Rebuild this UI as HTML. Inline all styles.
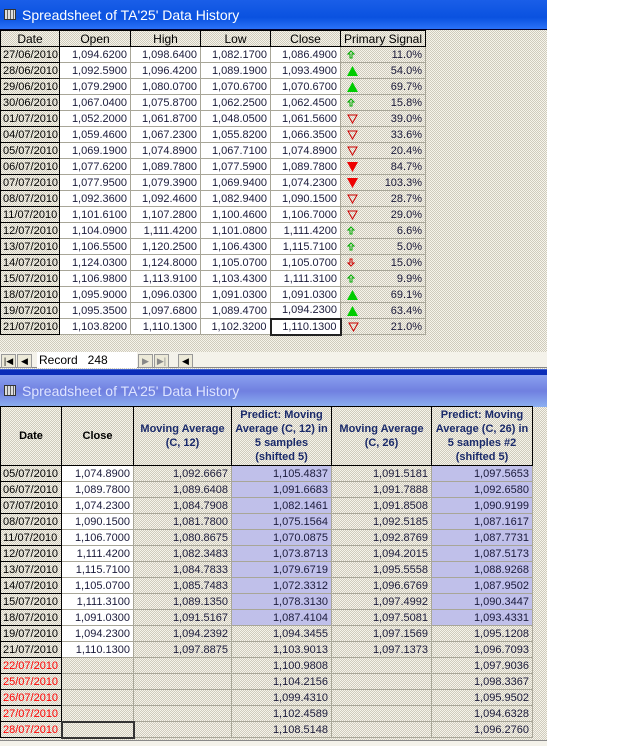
<!DOCTYPE html>
<html><head><meta charset="utf-8"><style>
*{margin:0;padding:0;box-sizing:border-box}
body{width:628px;height:746px;background:#fff;position:relative;overflow:hidden;font-family:"Liberation Sans",Arial,sans-serif;font-size:11px;color:#1a1a3a}
.dith{background:repeating-conic-gradient(#f6f4ea 0 25%,#cfcbbd 0 50%) 0 0/2px 2px}
.abs{position:absolute}
table{border-collapse:collapse;table-layout:fixed;position:absolute}
td,th{height:16px;padding:0 3px;white-space:nowrap;overflow:hidden;border:1px solid #a8a698;text-align:right;font-weight:normal;line-height:14px}
th{text-align:center;border:1px solid #000;color:#000;font-size:12px}
td.d{border:1px solid #000;text-align:left;padding:0 2px;color:#000}
.w{background:#fff}
.lv{background:repeating-conic-gradient(#d8d8f4 0 25%,#a8a8e0 0 50%) 0 0/2px 2px}
.r{color:#f00!important}
.sig{text-align:right;position:relative}
.sig svg{position:absolute;left:6px;top:3px}
.title{color:#fff;font-size:14px;line-height:30px;padding-left:22px}
.grid{position:absolute;left:4px;top:9px;width:12px;height:11px;border:1px solid #333;background:repeating-linear-gradient(90deg,#ddd 0 2px,#666 2px 3px),#ddd}
.btn{position:absolute;top:2px;width:15px;height:14px;background:#ece9d8;border:1px solid #999;font-size:9px;line-height:12px;text-align:center;color:#000}
</style></head><body>
<div class="abs dith" style="left:0;top:0;width:547px;height:369px"></div>
<div class="abs" style="left:0;top:0;width:547px;height:30px;background:linear-gradient(#1a5ee8,#0a52e0 60%,#2a72f8);border-bottom:1px solid #003"><div class="grid"></div><div class="title">Spreadsheet of TA'25' Data History</div></div>
<table style="left:0;top:30px;width:425px">
<colgroup><col style="width:59px"><col style="width:71px"><col style="width:70px"><col style="width:70px"><col style="width:70px"><col style="width:85px"></colgroup>
<tr><th>Date</th><th>Open</th><th>High</th><th>Low</th><th>Close</th><th>Primary Signal</th></tr>
<tr><td class="d">27/06/2010</td><td class="w">1,094.6200</td><td class="w">1,098.6400</td><td class="w">1,082.1700</td><td class="w">1,086.4900</td><td class="sig"><svg width="8" height="9"><path d="M4 1L1 4H3V8H5V4H7Z" fill="none" stroke="#0a0" stroke-width="1"/></svg>11.0%</td></tr>
<tr><td class="d">28/06/2010</td><td class="w">1,092.5900</td><td class="w">1,096.4200</td><td class="w">1,089.1900</td><td class="w">1,093.4900</td><td class="sig"><svg width="11" height="10"><path d="M5.5 0L11 10H0Z" fill="#0c0"/></svg>54.0%</td></tr>
<tr><td class="d">29/06/2010</td><td class="w">1,079.2900</td><td class="w">1,080.0700</td><td class="w">1,070.6700</td><td class="w">1,070.6700</td><td class="sig"><svg width="11" height="10"><path d="M5.5 0L11 10H0Z" fill="#0c0"/></svg>69.7%</td></tr>
<tr><td class="d">30/06/2010</td><td class="w">1,067.0400</td><td class="w">1,075.8700</td><td class="w">1,062.2500</td><td class="w">1,062.4500</td><td class="sig"><svg width="8" height="9"><path d="M4 1L1 4H3V8H5V4H7Z" fill="none" stroke="#0a0"/></svg>15.8%</td></tr>
<tr><td class="d">01/07/2010</td><td class="w">1,052.2000</td><td class="w">1,061.8700</td><td class="w">1,048.0500</td><td class="w">1,061.5600</td><td class="sig"><svg width="11" height="10"><path d="M1 1H10L5.5 9Z" fill="none" stroke="#c00"/></svg>39.0%</td></tr>
<tr><td class="d">04/07/2010</td><td class="w">1,059.4600</td><td class="w">1,067.2300</td><td class="w">1,055.8200</td><td class="w">1,066.3500</td><td class="sig"><svg width="11" height="10"><path d="M1 1H10L5.5 9Z" fill="none" stroke="#c00"/></svg>33.6%</td></tr>
<tr><td class="d">05/07/2010</td><td class="w">1,069.1900</td><td class="w">1,074.8900</td><td class="w">1,067.7100</td><td class="w">1,074.8900</td><td class="sig"><svg width="11" height="10"><path d="M1 1H10L5.5 9Z" fill="none" stroke="#c00"/></svg>20.4%</td></tr>
<tr><td class="d">06/07/2010</td><td class="w">1,077.6200</td><td class="w">1,089.7800</td><td class="w">1,077.5900</td><td class="w">1,089.7800</td><td class="sig"><svg width="11" height="10"><path d="M0 0H11L5.5 10Z" fill="#e00"/></svg>84.7%</td></tr>
<tr><td class="d">07/07/2010</td><td class="w">1,077.9500</td><td class="w">1,079.3900</td><td class="w">1,069.9400</td><td class="w">1,074.2300</td><td class="sig"><svg width="11" height="10"><path d="M0 0H11L5.5 10Z" fill="#e00"/></svg>103.3%</td></tr>
<tr><td class="d">08/07/2010</td><td class="w">1,092.3600</td><td class="w">1,092.4600</td><td class="w">1,082.9400</td><td class="w">1,090.1500</td><td class="sig"><svg width="11" height="10"><path d="M1 1H10L5.5 9Z" fill="none" stroke="#c00"/></svg>28.7%</td></tr>
<tr><td class="d">11/07/2010</td><td class="w">1,101.6100</td><td class="w">1,107.2800</td><td class="w">1,100.4600</td><td class="w">1,106.7000</td><td class="sig"><svg width="11" height="10"><path d="M1 1H10L5.5 9Z" fill="none" stroke="#c00"/></svg>29.0%</td></tr>
<tr><td class="d">12/07/2010</td><td class="w">1,104.0900</td><td class="w">1,111.4200</td><td class="w">1,101.0800</td><td class="w">1,111.4200</td><td class="sig"><svg width="8" height="9"><path d="M4 1L1 4H3V8H5V4H7Z" fill="none" stroke="#0a0"/></svg>6.6%</td></tr>
<tr><td class="d">13/07/2010</td><td class="w">1,106.5500</td><td class="w">1,120.2500</td><td class="w">1,106.4300</td><td class="w">1,115.7100</td><td class="sig"><svg width="8" height="9"><path d="M4 1L1 4H3V8H5V4H7Z" fill="none" stroke="#0a0"/></svg>5.0%</td></tr>
<tr><td class="d">14/07/2010</td><td class="w">1,124.0300</td><td class="w">1,124.8000</td><td class="w">1,105.0700</td><td class="w">1,105.0700</td><td class="sig"><svg width="8" height="9"><path d="M4 8L1 5H3V1H5V5H7Z" fill="none" stroke="#c00"/></svg>15.0%</td></tr>
<tr><td class="d">15/07/2010</td><td class="w">1,106.9800</td><td class="w">1,113.9100</td><td class="w">1,103.4300</td><td class="w">1,111.3100</td><td class="sig"><svg width="8" height="9"><path d="M4 1L1 4H3V8H5V4H7Z" fill="none" stroke="#0a0"/></svg>9.9%</td></tr>
<tr><td class="d">18/07/2010</td><td class="w">1,095.9000</td><td class="w">1,096.0300</td><td class="w">1,091.0300</td><td class="w">1,091.0300</td><td class="sig"><svg width="11" height="10"><path d="M5.5 0L11 10H0Z" fill="#0c0"/></svg>69.1%</td></tr>
<tr><td class="d">19/07/2010</td><td class="w">1,095.3500</td><td class="w">1,097.6800</td><td class="w">1,089.4700</td><td class="w">1,094.2300</td><td class="sig"><svg width="11" height="10"><path d="M5.5 0L11 10H0Z" fill="#0c0"/></svg>63.4%</td></tr>
<tr><td class="d">21/07/2010</td><td class="w">1,103.8200</td><td class="w">1,110.1300</td><td class="w">1,102.3200</td><td class="w" style="border:2px solid #222">1,110.1300</td><td class="sig"><svg width="11" height="10"><path d="M1 1H10L5.5 9Z" fill="none" stroke="#c00"/></svg>21.0%</td></tr>
</table>
<div class="abs" style="left:0;top:352px;width:547px;height:16px;background:#f4f2ea;border-bottom:1px solid #888">
<div class="btn" style="left:1px">|◀</div><div class="btn" style="left:17px">◀</div>
<div class="abs" style="left:37px;top:0;width:100px;height:16px;background:#fff;color:#000;font-size:12px;line-height:16px;padding-left:2px">Record&nbsp;&nbsp;&nbsp;248</div>
<div class="btn" style="left:138px;color:#888">▶</div><div class="btn" style="left:154px;color:#888">▶|</div>
<div class="btn" style="left:178px">◀</div>
</div>
<div class="abs" style="left:0;top:369px;width:547px;height:6px;background:#0a2cb8;border-top:1px solid #4060d0"></div>
<div class="abs dith" style="left:0;top:375px;width:547px;height:371px"></div>
<div class="abs" style="left:0;top:375px;width:547px;height:32px;background:linear-gradient(#8aa0f0,#7080e0 50%,#8cb0f0)"><div class="grid" style="top:10px"></div><div class="title" style="color:#dde4ff;line-height:32px">Spreadsheet of TA'25' Data History</div></div>
<table style="left:0;top:406px;width:532px">
<colgroup><col style="width:61px"><col style="width:72px"><col style="width:98px"><col style="width:100px"><col style="width:100px"><col style="width:101px"></colgroup>
<tr><th style="height:59px;font-weight:bold;font-size:11px">Date</th><th style="font-weight:bold;font-size:11px">Close</th><th style="font-weight:bold;font-size:11px;color:#1a2a6a;white-space:normal;line-height:14px">Moving Average (C, 12)</th><th style="font-weight:bold;font-size:11px;color:#1a2a6a;white-space:normal;line-height:14px">Predict: Moving Average (C, 12) in 5 samples (shifted 5)</th><th style="font-weight:bold;font-size:11px;color:#1a2a6a;white-space:normal;line-height:14px">Moving Average (C, 26)</th><th style="font-weight:bold;font-size:11px;color:#1a2a6a;white-space:normal;line-height:14px">Predict: Moving Average (C, 26) in 5 samples #2 (shifted 5)</th></tr>
<tr><td class="d">05/07/2010</td><td class="w">1,074.8900</td><td>1,092.6667</td><td class="lv">1,105.4837</td><td>1,091.5181</td><td class="lv">1,097.5653</td></tr>
<tr><td class="d">06/07/2010</td><td class="w">1,089.7800</td><td>1,089.6408</td><td class="lv">1,091.6683</td><td>1,091.7888</td><td class="lv">1,092.6580</td></tr>
<tr><td class="d">07/07/2010</td><td class="w">1,074.2300</td><td>1,084.7908</td><td class="lv">1,082.1461</td><td>1,091.8508</td><td class="lv">1,090.9199</td></tr>
<tr><td class="d">08/07/2010</td><td class="w">1,090.1500</td><td>1,081.7800</td><td class="lv">1,075.1564</td><td>1,092.5185</td><td class="lv">1,087.1617</td></tr>
<tr><td class="d">11/07/2010</td><td class="w">1,106.7000</td><td>1,080.8675</td><td class="lv">1,070.0875</td><td>1,092.8769</td><td class="lv">1,087.7731</td></tr>
<tr><td class="d">12/07/2010</td><td class="w">1,111.4200</td><td>1,082.3483</td><td class="lv">1,073.8713</td><td>1,094.2015</td><td class="lv">1,087.5173</td></tr>
<tr><td class="d">13/07/2010</td><td class="w">1,115.7100</td><td>1,084.7833</td><td class="lv">1,079.6719</td><td>1,095.5558</td><td class="lv">1,088.9268</td></tr>
<tr><td class="d">14/07/2010</td><td class="w">1,105.0700</td><td>1,085.7483</td><td class="lv">1,072.3312</td><td>1,096.6769</td><td class="lv">1,087.9502</td></tr>
<tr><td class="d">15/07/2010</td><td class="w">1,111.3100</td><td>1,089.1350</td><td class="lv">1,078.3130</td><td>1,097.4992</td><td class="lv">1,090.3447</td></tr>
<tr><td class="d">18/07/2010</td><td class="w">1,091.0300</td><td>1,091.5167</td><td class="lv">1,087.4104</td><td>1,097.5081</td><td class="lv">1,093.4331</td></tr>
<tr><td class="d">19/07/2010</td><td class="w">1,094.2300</td><td>1,094.2392</td><td>1,094.3455</td><td>1,097.1569</td><td>1,095.1208</td></tr>
<tr><td class="d">21/07/2010</td><td class="w">1,110.1300</td><td>1,097.8875</td><td>1,103.9013</td><td>1,097.1373</td><td>1,096.7093</td></tr>
<tr><td class="d r">22/07/2010</td><td></td><td></td><td>1,100.9808</td><td></td><td>1,097.9036</td></tr>
<tr><td class="d r">25/07/2010</td><td></td><td></td><td>1,104.2156</td><td></td><td>1,098.3367</td></tr>
<tr><td class="d r">26/07/2010</td><td></td><td></td><td>1,099.4310</td><td></td><td>1,095.9502</td></tr>
<tr><td class="d r">27/07/2010</td><td></td><td></td><td>1,102.4589</td><td></td><td>1,094.6328</td></tr>
<tr><td class="d r">28/07/2010</td><td style="border:2px solid #333"></td><td></td><td>1,108.5148</td><td></td><td>1,096.2760</td></tr>
</table>
<div class="abs" style="left:0;top:740px;width:547px;height:6px;background:#f4f2ea;border-top:1px solid #888"></div>
</body></html>
